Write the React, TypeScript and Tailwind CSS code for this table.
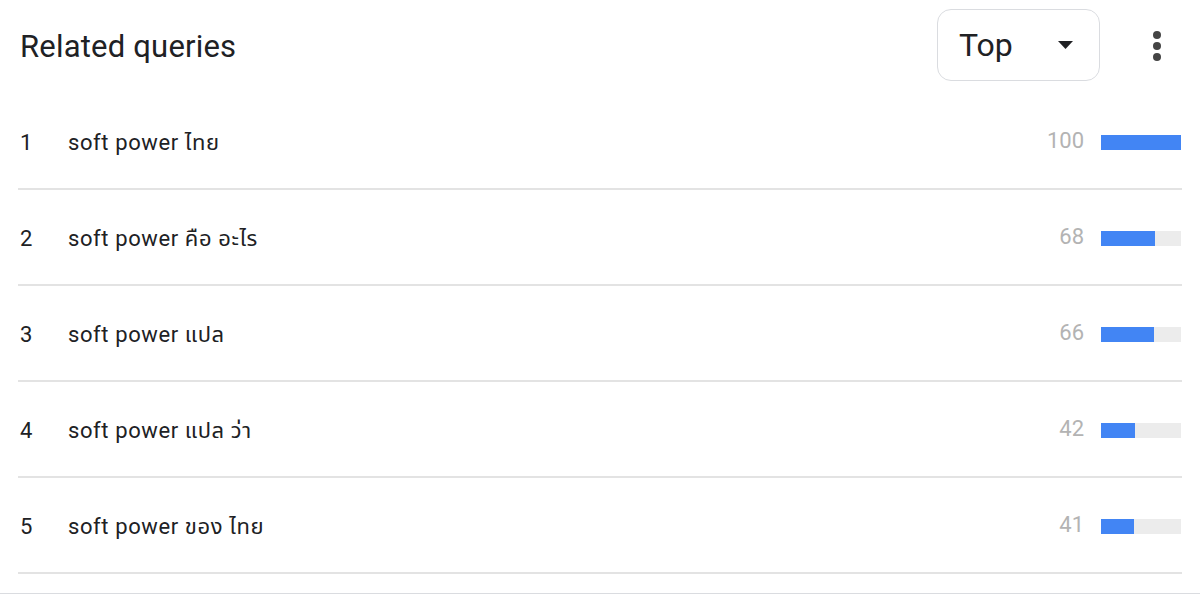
import React from "react";

const rows = [
  { n: 1, q: "soft power ไทย", v: 100 },
  { n: 2, q: "soft power คือ อะไร", v: 68 },
  { n: 3, q: "soft power แปล", v: 66 },
  { n: 4, q: "soft power แปล ว่า", v: 42 },
  { n: 5, q: "soft power ของ ไทย", v: 41 },
];

export default function App() {
  return (
    <div
      className="w-[1200px] h-[594px] bg-white rounded-t-xl border-b border-[#dadce0] overflow-hidden text-[#202124]"
      style={{ fontFamily: "Roboto, 'Noto Sans', 'Noto Sans Thai', sans-serif" }}
    >
      <div className="h-[94px] flex items-center pl-5 pr-[39px]">
        <div className="text-[31px] leading-none tracking-[0.2px] mt-[-2px]">Related queries</div>
        <div className="ml-auto w-[163px] h-[72px] mt-[-4px] border border-[#dadce0] rounded-[14px] flex items-center pl-[21px] pr-[26px]">
          <span className="text-[32px] leading-none">Top</span>
          <svg className="ml-auto" width="15" height="8" viewBox="0 0 15 8">
            <path d="M0 0 L15 0 L7.5 8 Z" fill="#202124" />
          </svg>
        </div>
        <div className="ml-[53px] flex flex-col gap-[3px] mt-[-2px]">
          <span className="block w-[8px] h-[8px] rounded-full bg-[#444]" />
          <span className="block w-[8px] h-[8px] rounded-full bg-[#444]" />
          <span className="block w-[8px] h-[8px] rounded-full bg-[#444]" />
        </div>
      </div>
      <div className="mx-[18px]">
        {rows.map((r) => (
          <div
            key={r.n}
            className="h-[96px] flex items-center border-b-2 border-[#e3e3e3] pl-[2px] pr-[1px] pt-[3px]"
          >
            <span className="w-[48px] text-[22px] leading-none">{r.n}</span>
            <span className="text-[22px] leading-none tracking-[0.6px]">{r.q}</span>
            <span className="ml-auto text-[22px] leading-none text-[#b3b3b3] mt-[-4px]">{r.v}</span>
            <div className="ml-[17px] w-[80px] h-[15px] bg-[#ececec]">
              <div className="h-full bg-[#4285f4]" style={{ width: `${r.v}%` }} />
            </div>
          </div>
        ))}
      </div>
    </div>
  );
}
